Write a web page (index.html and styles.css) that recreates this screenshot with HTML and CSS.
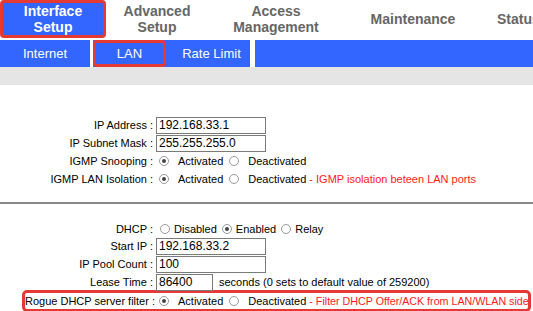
FILE: index.html
```html
<!DOCTYPE html>
<html lang="en">
<head>
    <meta charset="UTF-8">
    <title>LAN</title>
    <link rel="stylesheet" href="styles.css">
</head>
<body>
    <div class="topnav">
        <div class="tab tab-active">Interface<br>Setup</div>
        <div class="tab tab-adv">Advanced<br>Setup</div>
        <div class="tab tab-acc">Access<br>Management</div>
        <div class="tab tab-mnt">Maintenance</div>
        <div class="tab tab-sts">Status</div>
    </div>

    <div class="subnav">
        <div class="sub sub-internet">Internet</div>
        <div class="sub sub-lan">LAN</div>
        <div class="sub sub-rate">Rate Limit</div>
    </div>

    <div class="greybar"></div>

    <div class="section first">
        <div class="row">
            <div class="label">IP Address :</div>
            <div class="field"><input type="text" class="txt" value="192.168.33.1"></div>
        </div>
        <div class="row">
            <div class="label">IP Subnet Mask :</div>
            <div class="field"><input type="text" class="txt" value="255.255.255.0"></div>
        </div>
        <div class="row">
            <div class="label">IGMP Snooping :</div>
            <div class="field">
                <input type="radio" name="snoop" checked><span class="opt">Activated</span>
                <input type="radio" name="snoop"><span class="opt">Deactivated</span>
            </div>
        </div>
        <div class="row">
            <div class="label">IGMP LAN Isolation :</div>
            <div class="field">
                <input type="radio" name="iso" checked><span class="opt">Activated</span>
                <input type="radio" name="iso"><span class="opt">Deactivated</span>
                <span class="note">- IGMP isolation beteen LAN ports</span>
            </div>
        </div>
    </div>

    <div class="divider"></div>

    <div class="section second">
        <div class="row row-dhcp">
            <div class="label">DHCP :</div>
            <div class="field">
                <input type="radio" name="dhcp"><span class="opt">Disabled</span>
                <input type="radio" name="dhcp" checked><span class="opt">Enabled</span>
                <input type="radio" name="dhcp"><span class="opt">Relay</span>
            </div>
        </div>
        <div class="row">
            <div class="label">Start IP :</div>
            <div class="field"><input type="text" class="txt" value="192.168.33.2"></div>
        </div>
        <div class="row">
            <div class="label">IP Pool Count :</div>
            <div class="field"><input type="text" class="txt" value="100"></div>
        </div>
        <div class="row">
            <div class="label">Lease Time :</div>
            <div class="field"><input type="text" class="txt txt-short" value="86400"><span class="unit">seconds (0 sets to default value of 259200)</span></div>
        </div>
        <div class="row row-rogue">
            <div class="label">Rogue DHCP server filter :</div>
            <div class="field">
                <input type="radio" name="rogue" checked><span class="opt">Activated</span>
                <input type="radio" name="rogue"><span class="opt">Deactivated</span>
                <span class="note">- Filter DHCP Offer/ACK from LAN/WLAN side</span>
            </div>
        </div>
    </div>
</body>
</html>
```

FILE: styles.css
```css
body {
    margin: 0;
    font-family: "Liberation Sans", Arial, sans-serif;
    font-size: 11px;
    color: #000;
    background: #fff;
    width: 533px;
    overflow: hidden;
}
.topnav {
    display: flex;
    height: 40px;
    white-space: nowrap;
    overflow: hidden;
}
.tab {
    height: 38px;
    display: flex;
    align-items: center;
    justify-content: center;
    text-align: center;
    font-size: 14px;
    font-weight: bold;
    line-height: 16px;
    color: #666;
    box-sizing: border-box;
    flex-shrink: 0;
}
.tab-active {
    width: 106px;
    background: #3366ff;
    color: #fff;
    border: 3px solid #e53935;
    border-radius: 4px;
}
.tab-adv { width: 102px; }
.tab-acc { width: 136px; }
.tab-mnt { width: 138px; }
.tab-sts { width: 51px; justify-content: flex-start; padding-left: 15px; }
.subnav {
    display: flex;
    height: 27px;
    background: #3366ff;
}
.sub {
    display: flex;
    align-items: center;
    justify-content: center;
    color: #fff;
    font-size: 13px;
    box-sizing: border-box;
    border-right: 3px solid #fff;
}
.sub-internet { width: 93px; }
.sub-lan {
    width: 73px;
    border: 3px solid #e53935;
    border-radius: 4px;
    margin-right: 5px;
}
.sub-rate { width: 84px; border-right-width: 5px; padding-left: 2px; }
.greybar {
    height: 18px;
    background: #e5e5e5;
}
.section.first {
    padding-top: 31px;
    padding-bottom: 14px;
}
.divider {
    height: 2px;
    background: #888;
}
.section.second {
    padding-top: 17px;
}
.row {
    display: flex;
    align-items: center;
    height: 18px;
    white-space: nowrap;
}
.label {
    width: 153px;
    text-align: right;
    flex-shrink: 0;
}
.field {
    display: flex;
    align-items: center;
    padding-left: 3px;
    white-space: nowrap;
}
.txt {
    width: 110px;
    height: 17px;
    box-sizing: border-box;
    margin: 0;
    padding: 0 2px;
    border: 1px solid #7a7a7a;
    font-family: "Liberation Sans", Arial, sans-serif;
    font-size: 12px;
    color: #000;
}
.txt-short { width: 57px; }
.unit { margin-left: 6px; }
input[type="radio"] {
    appearance: none;
    -webkit-appearance: none;
    width: 10px;
    height: 10px;
    margin: 0 9px 0 3px;
    border: 1px solid #9a9a9a;
    border-radius: 50%;
    background: #fff;
    box-sizing: border-box;
    position: relative;
    flex-shrink: 0;
}
input[type="radio"]:checked::after {
    content: "";
    position: absolute;
    left: 2px;
    top: 2px;
    width: 4px;
    height: 4px;
    border-radius: 50%;
    background: #444;
}
.opt { margin-right: 3px; }
.note {
    color: #ff1a1a;
}
.row-dhcp { height: 16px; }
.row-dhcp input[type="radio"] { margin: 0 4px 0 4px; }
.row-dhcp .opt { margin-right: 1px; }
.row-rogue {
    height: 22px;
    margin-top: -1px;
    margin-left: 22px;
    margin-right: 2px;
    border: 3px solid #e53935;
    border-radius: 5px;
    box-sizing: border-box;
}
.row-rogue .label { width: 128px; }
.row-rogue .note { font-size: 10.7px; }
```
